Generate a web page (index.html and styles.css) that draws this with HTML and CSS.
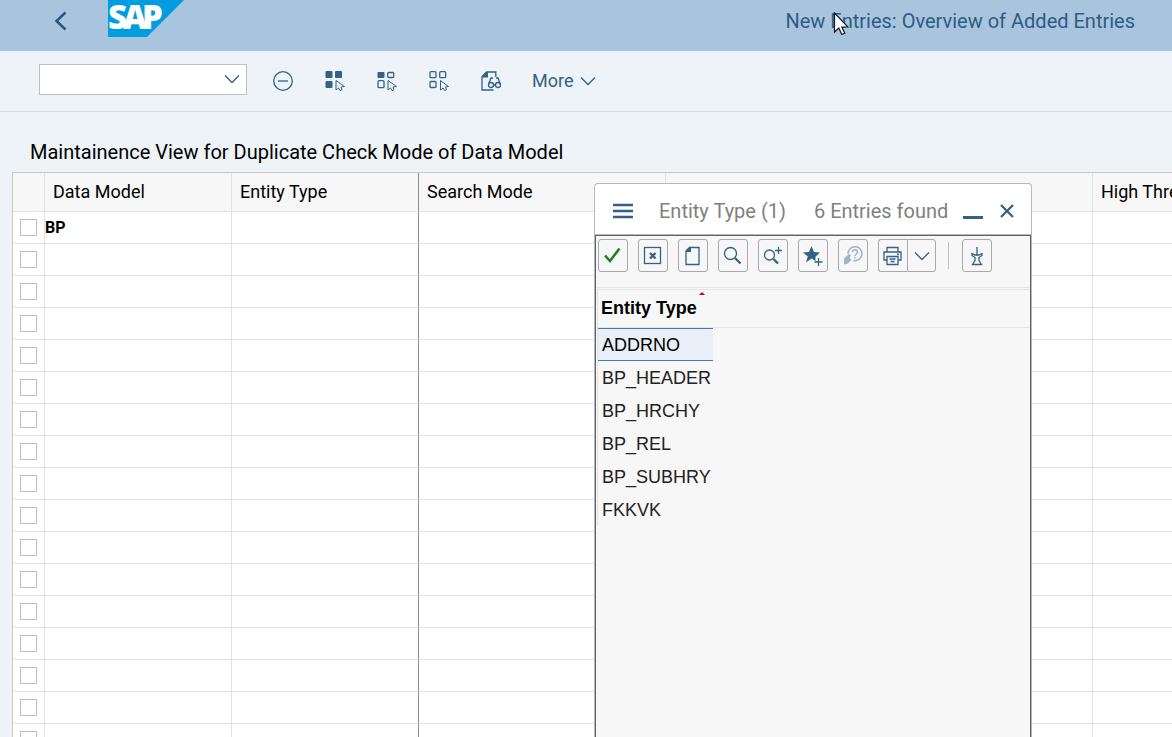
FILE: index.html
```html
<!DOCTYPE html>
<html lang="en">
<head>
<meta charset="utf-8">
<title>New Entries: Overview of Added Entries</title>
<link rel="stylesheet" href="styles.css">
</head>
<body>
<div class="app">
  <header class="shell">
    <button class="back" aria-label="Back"><svg width="14" height="20" viewBox="0 0 14 20"><path d="M11.500 1.500 2.500 10l9 8.500" fill="none" stroke="#285580" stroke-width="2.500"/></svg></button>
    <svg class="logo" width="76" height="37" viewBox="0 0 76 37" role="img" aria-label="SAP"><path d="M0 0h76L39 37H0z" fill="#009de0"/><text class="logo-text" x="0 15 34" y="29">SAP</text></svg>
    <h1 class="shell-title">New Entries: Overview of Added Entries</h1>
  </header>

  <div class="toolbar">
    <div class="combo">
      <input class="combo-input" type="text" aria-label="Command">
      <button class="combo-arrow" aria-label="Show commands"><svg width="16" height="10" viewBox="0 0 16 10"><path d="M1 1.500 8 8.500l7-7" class="line"/></svg></button>
    </div>
    <button class="tool" aria-label="Delete"><svg width="20" height="20" viewBox="0 0 20 20"><circle cx="10" cy="10" r="9.300" class="line"/><path d="M5 10h10" class="line"/></svg></button>
    <button class="tool" aria-label="Select all"><svg width="20" height="20" viewBox="0 0 20 20"><g class="solid"><rect x=".5" y="0" width="7" height="7" rx="1"/><rect x="10" y="0" width="7" height="7" rx="1"/><rect x=".5" y="10" width="7" height="7" rx="1"/></g><path d="M11 9.500v9.500l2.500-2 1.500 2.600 2-.8-1-2.800 3.500-.5z" class="thin"/></svg></button>
    <button class="tool" aria-label="Select block"><svg width="20" height="20" viewBox="0 0 20 20"><rect x=".5" y="1" width="7" height="6" rx="1" class="solid"/><rect x="10.700" y="1.500" width="6" height="5" rx="1" class="line"/><rect x="1" y="9.700" width="6" height="7" rx="1" class="line"/><path d="M11 9.500v9.500l2.500-2 1.500 2.600 2-.8-1-2.800 3.500-.5z" class="thin"/></svg></button>
    <button class="tool" aria-label="Deselect all"><svg width="20" height="20" viewBox="0 0 20 20"><g class="line"><rect x="1" y=".7" width="6" height="6" rx="1"/><rect x="10.700" y=".7" width="6" height="6" rx="1"/><rect x="1" y="10.500" width="6" height="6" rx="1"/></g><path d="M11.500 9.500v9.500l2.500-2 1.500 2.600 2-.8-1-2.800 3-.5z" class="thin"/></svg></button>
    <button class="tool" aria-label="Display"><svg width="20" height="20" viewBox="0 0 20 20"><path d="M12.500 19H1V5.500L5.500 1h9.300v5" class="line"/><path d="M1 6.500v-1L5.500 1H7v5.500z" class="solid"/><g class="line"><circle cx="10" cy="14" r="2.500"/><circle cx="17" cy="14" r="2.500"/><path d="M12.500 14h2M7.700 13l2.300-6h2M19.300 13 17 7h-2"/></g></svg></button>
    <button class="more">More <svg width="16" height="10" viewBox="0 0 16 10"><path d="M1 1.500 8 8.500l7-7" class="line"/></svg></button>
  </div>

  <main class="content">
    <h2 class="view-title">Maintainence View for Duplicate Check Mode of Data Model</h2>
    <table class="grid">
      <colgroup><col class="c-sel"><col class="c-std"><col class="c-std"><col class="c-search"><col class="c-wide"><col></colgroup>
      <thead><tr><th></th><th>Data Model</th><th class="frozen">Entity Type</th><th>Search Mode</th><th></th><th>High Threshold</th></tr></thead>
      <tbody>
        <tr><td><input type="checkbox" aria-label="Select row 1"></td><td>BP</td><td class="frozen"></td><td></td><td></td><td></td></tr>
        <tr><td><input type="checkbox" aria-label="Select row 2"></td><td></td><td class="frozen"></td><td></td><td></td><td></td></tr>
        <tr><td><input type="checkbox" aria-label="Select row 3"></td><td></td><td class="frozen"></td><td></td><td></td><td></td></tr>
        <tr><td><input type="checkbox" aria-label="Select row 4"></td><td></td><td class="frozen"></td><td></td><td></td><td></td></tr>
        <tr><td><input type="checkbox" aria-label="Select row 5"></td><td></td><td class="frozen"></td><td></td><td></td><td></td></tr>
        <tr><td><input type="checkbox" aria-label="Select row 6"></td><td></td><td class="frozen"></td><td></td><td></td><td></td></tr>
        <tr><td><input type="checkbox" aria-label="Select row 7"></td><td></td><td class="frozen"></td><td></td><td></td><td></td></tr>
        <tr><td><input type="checkbox" aria-label="Select row 8"></td><td></td><td class="frozen"></td><td></td><td></td><td></td></tr>
        <tr><td><input type="checkbox" aria-label="Select row 9"></td><td></td><td class="frozen"></td><td></td><td></td><td></td></tr>
        <tr><td><input type="checkbox" aria-label="Select row 10"></td><td></td><td class="frozen"></td><td></td><td></td><td></td></tr>
        <tr><td><input type="checkbox" aria-label="Select row 11"></td><td></td><td class="frozen"></td><td></td><td></td><td></td></tr>
        <tr><td><input type="checkbox" aria-label="Select row 12"></td><td></td><td class="frozen"></td><td></td><td></td><td></td></tr>
        <tr><td><input type="checkbox" aria-label="Select row 13"></td><td></td><td class="frozen"></td><td></td><td></td><td></td></tr>
        <tr><td><input type="checkbox" aria-label="Select row 14"></td><td></td><td class="frozen"></td><td></td><td></td><td></td></tr>
        <tr><td><input type="checkbox" aria-label="Select row 15"></td><td></td><td class="frozen"></td><td></td><td></td><td></td></tr>
        <tr><td><input type="checkbox" aria-label="Select row 16"></td><td></td><td class="frozen"></td><td></td><td></td><td></td></tr>
        <tr><td><input type="checkbox" aria-label="Select row 17"></td><td></td><td class="frozen"></td><td></td><td></td><td></td></tr>
      </tbody>
    </table>
  </main>

  <section class="popup" role="dialog" aria-label="Entity Type">
    <div class="popup-head">
      <button aria-label="Menu"><svg width="20" height="16" viewBox="0 0 20 16"><path d="M0 2h20M0 8h20M0 14h20" class="heavy"/></svg></button>
      <span class="popup-name">Entity Type (1)</span>
      <span class="popup-count">6 Entries found</span>
      <button aria-label="Minimize"><svg width="20" height="16" viewBox="0 0 20 16"><path d="M0 14.500h20" stroke="#346187" stroke-width="3"/></svg></button>
      <button class="close" aria-label="Close"><svg width="14" height="14" viewBox="0 0 14 14"><path d="M1 1l12 12M13 1 1 13" class="heavy"/></svg></button>
    </div>
    <div class="popup-body">
      <div class="popup-tools">
        <button class="box" aria-label="Copy"><svg width="20" height="20" viewBox="0 0 20 20"><path d="M2 9.500 7 15 16.500 2.500" fill="none" stroke="#23801f" stroke-width="2.600"/></svg></button>
        <button class="box" aria-label="Cancel"><svg width="20" height="20" viewBox="0 0 20 20"><rect x="1.500" y="1.500" width="16" height="16" class="line"/><path d="M7 7l5.500 5.500M12.500 7 7 12.500" class="heavy"/></svg></button>
        <button class="box" aria-label="New values"><svg width="20" height="20" viewBox="0 0 20 20"><path d="M3 5 6.500 1.500h9.500v17H3z" class="line"/><path d="M3 6V5l3.500-3.500H8V6z" class="solid"/></svg></button>
        <button class="box" aria-label="Find"><svg width="20" height="20" viewBox="0 0 20 20"><circle cx="7.500" cy="7.500" r="6" class="line"/><path d="M12 12l5.500 5.500" class="heavy"/></svg></button>
        <button class="box" aria-label="Find next"><svg width="20" height="20" viewBox="0 0 20 20"><circle cx="6.500" cy="9" r="5" class="line"/><path d="M10.500 13l4.500 4.500" class="heavy"/><path d="M15.500 1v7M12 4.500h7" class="line"/></svg></button>
        <button class="box" aria-label="Add to personal list"><svg width="20" height="20" viewBox="0 0 20 20"><path d="M8.500 0l2.500 6 6 .4-4.500 4.400v4.200L8.500 12.500 3 16.500l1.800-6L0 6.500l6-.4z" class="solid"/><path d="M15.500 12v8M11.500 16h8" class="line"/></svg></button>
        <button class="box" aria-label="Help"><svg width="20" height="20" viewBox="0 0 20 20"><path d="M5 8a7 7 0 1 1 5.500 6.500" fill="none" stroke="#9db5cc" stroke-width="1.500"/><path d="M9.500 6c0-3 5-3 5 0 0 2-2.500 2-2.500 4M12 11v1.500" fill="none" stroke="#9db5cc" stroke-width="1.500"/><path d="M1 18.500v-6L6 8l2 1-1.500 3 2 1.500-3.500 4z" fill="#9db5cc"/></svg></button>
        <span class="split">
          <button class="box left" aria-label="Print"><svg width="20" height="20" viewBox="0 0 20 20"><path d="M4 6V1.500h11V6M4 14H1V6h17v8h-3M4 10.500h11V18.500H4zM6.500 13h6M7.500 15.500h4" class="line"/><circle cx="15" cy="8.300" r="1" class="solid"/></svg></button><button class="box right" aria-label="Print options"><svg width="16" height="10" viewBox="0 0 16 10"><path d="M1 1.500 8 8.500l7-7" class="line"/></svg></button>
        </span>
        <span class="rule"></span>
        <button class="box" aria-label="Pin"><svg width="20" height="20" viewBox="0 0 20 20"><path d="M10 1v9M5 7.500v2l3 2v3l-2.500 4h9l-2.500-4v-3l3-2v-2l-3 1.500H8z" class="line"/></svg></button>
      </div>
      <table class="hits">
        <thead><tr><th><span class="sort-head">Entity Type<i class="sort"></i></span></th></tr></thead>
        <tbody>
          <tr class="active"><td><span class="hit">ADDRNO</span></td></tr>
          <tr><td><span class="hit">BP_HEADER</span></td></tr>
          <tr><td><span class="hit">BP_HRCHY</span></td></tr>
          <tr><td><span class="hit">BP_REL</span></td></tr>
          <tr><td><span class="hit">BP_SUBHRY</span></td></tr>
          <tr><td><span class="hit">FKKVK</span></td></tr>
        </tbody>
      </table>
    </div>
  </section>

  <svg class="pointer" width="16" height="24" viewBox="0 0 16 24"><path d="M1.500 1v19l4.300-4 3 6.500 3-1.300-3-6.200H15z" fill="#fff" stroke="#10182a" stroke-width="1.200"/></svg>
</div>
</body>
</html>
```
FILE: styles.css
```css
* { box-sizing: border-box; }
body {
  margin: 0;
  font-family: Roboto, "Liberation Sans", sans-serif;
  font-size: 18px;
  color: #000;
  background: #eef3f8;
}
button {
  margin: 0;
  padding: 0;
  border: 0;
  background: none;
  font: inherit;
  color: inherit;
  display: flex;
  align-items: center;
  justify-content: center;
}
svg { display: block; flex: none; }
.line { fill: none; stroke: #346187; stroke-width: 1.3; }
.thin { fill: none; stroke: #346187; stroke-width: 1; }
.heavy { fill: none; stroke: #346187; stroke-width: 2.3; }
.solid { fill: #346187; }

.app { position: relative; height: 100vh; overflow: hidden; }

.shell {
  display: flex;
  align-items: flex-start;
  height: 51px;
  padding: 0 37px 0 54px;
  background: #a9c5de;
}
.back { width: 14px; height: 41px; }
.logo { margin-left: 40px; }
.logo-text { font: 800 33px "Open Sans", sans-serif; fill: #fff; }
.shell-title {
  margin: 0 0 0 auto;
  font-size: 20px;
  font-weight: 400;
  line-height: 42px;
  color: #2f5b84;
}

.toolbar {
  display: flex;
  align-items: center;
  height: 61px;
  padding: 0 39px;
  border-bottom: 1px solid #cfe0ee;
  color: #346187;
}
.combo {
  display: flex;
  width: 208px;
  height: 31px;
  margin: 0 10px 4px 0;
  border: 1px solid #bfbfbf;
  background: #fff;
}
.combo-input { flex: 1; min-width: 0; border: 0; padding: 0 8px; font: inherit; background: none; }
.combo-arrow { width: 28px; }
.tool { width: 52px; height: 36px; }
.more { gap: 7px; margin-left: 15px; line-height: 36px; }

.content { padding-left: 12px; }
.view-title {
  margin: 0;
  padding: 20px 18px 0;
  height: 60px;
  font-size: 20px;
  font-weight: 400;
  line-height: 40px;
  white-space: nowrap;
}
.grid {
  width: 100%;
  table-layout: fixed;
  border-collapse: separate;
  border-spacing: 0;
  border-top: 1px solid #c6c8ca;
  border-left: 1px solid #c6c8ca;
  background: #fff;
}
.c-sel { width: 32px; }
.c-std { width: 187px; }
.c-search { width: 247px; }
.c-wide { width: 427px; }
.grid th, .grid td {
  border-right: 1px solid #e2e2e2;
  border-bottom: 1px solid #e2e2e2;
  overflow: hidden;
  white-space: nowrap;
  text-align: left;
}
.grid th {
  height: 39px;
  padding: 0 8px 2px;
  background: #f7f7f7;
  font-weight: 400;
}
.grid td { height: 32px; padding: 0; font-size: 16px; font-weight: 700; }
.grid .frozen { border-right-color: #8c8c8c; }
.grid th:last-child, .grid td:last-child { padding-right: 0; border-right: 0; }
.grid input {
  display: block;
  appearance: none;
  width: 17px;
  height: 17px;
  margin: 0 0 0 7px;
  border: 1px solid #bfbfbf;
  background: #fff;
}

.popup {
  position: absolute;
  top: 183px;
  bottom: 0;
  left: 594px;
  width: 438px;
  display: flex;
  flex-direction: column;
  border: 1px solid #b5b8bc;
  border-bottom: 0;
  border-radius: 4px 4px 0 0;
  background: #fff;
}
.popup-head {
  display: flex;
  align-items: center;
  height: 51px;
  padding: 3px 17px 0 18px;
  border-bottom: 1px solid #b5b8bc;
  font-size: 20px;
  color: #808080;
  white-space: nowrap;
}
.popup-name { margin-left: 26px; }
.popup-count { margin: 0 auto 0 28px; }
.close { margin-left: 17px; }
.popup-body {
  flex: 1;
  border: 1px solid #5f6266;
  border-bottom: 0;
  background: #f7f7f7;
}
.popup-tools {
  display: flex;
  gap: 10px;
  height: 52px;
  padding: 3px 2px;
  border-bottom: 1px solid #e5e5e5;
}
.box {
  width: 30px;
  height: 33px;
  border: 1px solid #a9a9a9;
  border-radius: 3px;
}
.split { display: flex; }
.left { border-radius: 3px 0 0 3px; border-right: 0; }
.left, .right { width: 29px; }
.right { border-radius: 0 3px 3px 0; }
.rule { width: 1px; height: 27px; margin: 3px 3px 0 2px; background: #bfbfbf; }

.hits {
  width: calc(100% - 1px);
  margin: 1px 0 0 1px;
  border-spacing: 0;
  border-top: 1px solid #e5e5e5;
  border-left: 1px solid #e5e5e5;
  font-family: "Liberation Sans", Arial, sans-serif;
  color: #222;
}
.hits th {
  height: 38px;
  padding: 0 3px;
  border-bottom: 1px solid #e5e5e5;
  text-align: left;
  color: #000;
}
.sort-head { position: relative; }
.sort {
  position: absolute;
  top: -6px;
  right: -8px;
  border: 3px solid transparent;
  border-top: 0;
  border-bottom-color: #c4002b;
}
.hits td { padding: 0; }
.hit {
  display: block;
  width: 115px;
  height: 33px;
  padding: 1px 4px 0;
  line-height: 33px;
}
.active .hit {
  border-top: 1px solid #427cac;
  border-bottom: 1px solid #427cac;
  line-height: 31px;
  background: #e8eff7;
  color: #000;
}
.pointer { position: absolute; left: 833px; top: 12px; }
```
